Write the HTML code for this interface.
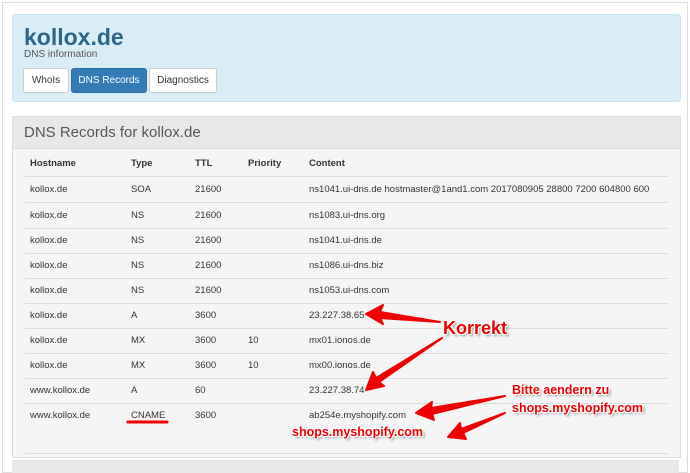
<!DOCTYPE html>
<html><head><style>
body{margin:0;width:690px;height:473px;background:#fff;font-family:"Liberation Sans",sans-serif;position:relative;overflow:hidden}
.frame{position:absolute;left:2px;top:2px;width:684px;height:469px;border:1px solid #ddd}
.jumbo{position:absolute;left:12px;top:14px;width:667px;height:86px;background:#d9edf7;border:1px solid #c5e3f0;border-radius:3px}
.jumbo h1{position:absolute;left:11px;top:9px;margin:0;font-size:23px;font-weight:bold;color:#2b6587}
.jumbo .sub{position:absolute;left:11px;top:34px;font-size:10px;color:#555}
.btn{position:absolute;top:53px;height:23px;line-height:23px;font-size:10px;border:1px solid #ccc;background:#fff;border-radius:3px;text-align:center;color:#333}
.panel{position:absolute;left:12px;top:116px;width:667px;height:340px;border:1px solid #ddd;background:#f5f5f5}
.ph{position:absolute;left:0;top:0;width:667px;height:31px;background:#e8e8e8;border-bottom:1px solid #ddd;font-size:15px;color:#555;line-height:31px;text-indent:11px}
.row{position:absolute;left:12px;width:643px;height:25px;border-bottom:1px solid #ddd;font-size:9.5px;color:#333;line-height:25px}
.row span{position:absolute}
.hd{font-weight:bold}
.bot{position:absolute;left:12px;top:460px;width:667px;height:12px;background:#e8e8e8;border-top:1px solid #ddd}
.ann{position:absolute;font-weight:bold;color:#e00;text-shadow:1px 1px 1px #fff,-1px -1px 1px #fff,1px -1px 1px #fff,-1px 1px 1px #fff,2px 2px 2px #888}
</style></head><body>
<div class="frame"></div>
<div class="jumbo">
<h1>kollox.de</h1><div class="sub">DNS information</div>
<div class="btn" style="left:10px;width:44px">WhoIs</div>
<div class="btn" style="left:58px;width:74px;background:#337ab7;border-color:#2e6da4;color:#fff">DNS Records</div>
<div class="btn" style="left:136px;width:66px">Diagnostics</div>
</div>
<div class="panel"><div class="ph">DNS Records for kollox.de</div>
<div class="row hd" style="top:34px"><span style="left:5px">Hostname</span><span style="left:106px">Type</span><span style="left:170px">TTL</span><span style="left:223px">Priority</span><span style="left:284px">Content</span></div>
<div class="row" style="top:60px"><span style="left:5px">kollox.de</span><span style="left:106px">SOA</span><span style="left:170px">21600</span><span style="left:284px">ns1041.ui-dns.de hostmaster@1and1.com 2017080905 28800 7200 604800 600</span></div>
<div class="row" style="top:86px"><span style="left:5px">kollox.de</span><span style="left:106px">NS</span><span style="left:170px">21600</span><span style="left:284px">ns1083.ui-dns.org</span></div>
<div class="row" style="top:111px"><span style="left:5px">kollox.de</span><span style="left:106px">NS</span><span style="left:170px">21600</span><span style="left:284px">ns1041.ui-dns.de</span></div>
<div class="row" style="top:136px"><span style="left:5px">kollox.de</span><span style="left:106px">NS</span><span style="left:170px">21600</span><span style="left:284px">ns1086.ui-dns.biz</span></div>
<div class="row" style="top:161px"><span style="left:5px">kollox.de</span><span style="left:106px">NS</span><span style="left:170px">21600</span><span style="left:284px">ns1053.ui-dns.com</span></div>
<div class="row" style="top:186px"><span style="left:5px">kollox.de</span><span style="left:106px">A</span><span style="left:170px">3600</span><span style="left:284px">23.227.38.65</span></div>
<div class="row" style="top:211px"><span style="left:5px">kollox.de</span><span style="left:106px">MX</span><span style="left:170px">3600</span><span style="left:223px">10</span><span style="left:284px">mx01.ionos.de</span></div>
<div class="row" style="top:236px"><span style="left:5px">kollox.de</span><span style="left:106px">MX</span><span style="left:170px">3600</span><span style="left:223px">10</span><span style="left:284px">mx00.ionos.de</span></div>
<div class="row" style="top:261px"><span style="left:5px">www.kollox.de</span><span style="left:106px">A</span><span style="left:170px">60</span><span style="left:284px">23.227.38.74</span></div>
<div class="row" style="top:286px"><span style="left:5px">www.kollox.de</span><span style="left:106px">CNAME</span><span style="left:170px">3600</span><span style="left:284px">ab254e.myshopify.com</span></div>
<div class="row" style="top:311px;background:#f5f5f5"></div>
</div>
<div class="bot"></div>
<svg style="position:absolute;left:0;top:0" width="690" height="473">
<g fill="#e00" stroke="#e00" stroke-linejoin="round">
<line x1="128" y1="422" x2="167" y2="422" stroke-width="3" stroke-linecap="round"/>
<path d="M366 314 L383 305 L380 312 L440 322 L380 318 L383 324 Z" stroke-width="2"/>
<path d="M366 390 L373 372 L376 378 L442 338 L379 382 L384 386 Z" stroke-width="2"/>
<path d="M416 413 L432 402 L431 408 L505 396 L432 414 L434 420 Z" stroke-width="2"/>
<path d="M448 437 L460 423 L461 429 L505 413 L463 433 L466 439 Z" stroke-width="2"/>
</g></svg>
<div class="ann" style="left:443px;top:318px;font-size:18px">Korrekt</div>
<div class="ann" style="left:512px;top:383px;font-size:12.5px">Bitte aendern zu</div>
<div class="ann" style="left:512px;top:401px;font-size:12.5px">shops.myshopify.com</div>
<div class="ann" style="left:292px;top:425px;font-size:12.5px">shops.myshopify.com</div>
</body></html>
